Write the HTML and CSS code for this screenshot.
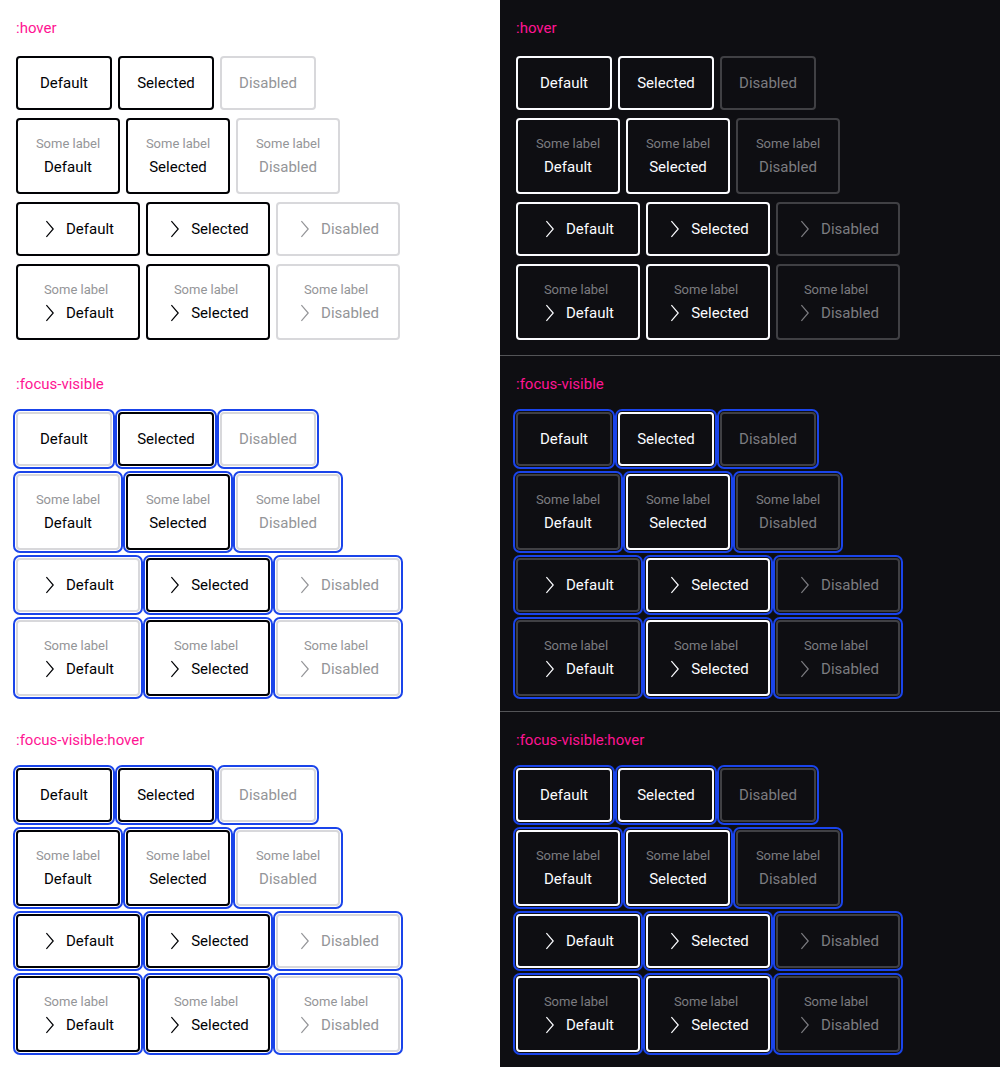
FILE: index.html
```
<!DOCTYPE html>
<html lang="en">
<head>
<meta charset="utf-8">
<meta name="viewport" content="width=device-width, initial-scale=1">
<title>Button tile states</title>
<link rel="stylesheet" href="styles.css">
</head>
<body>
<main class="board" id="board"></main>
<template id="chevron"><svg class="icon" viewBox="0 0 24 24" aria-hidden="true"><path d="M8.4 4.2 15.2 12l-6.8 7.8"/></svg></template>
<script src="states.js"></script>
</body>
</html>
```
FILE: styles.css
```
* { box-sizing: border-box; }

body {
  margin: 0;
  font-family: Roboto, "Liberation Sans", sans-serif;
  font-size: 15px;
  line-height: 24px;
}

.board {
  display: grid;
  grid-template-columns: 1fr 1fr;
}

.theme {
  --bg: #fff;
  --primary: #010205;
  --muted: #949598;
  --low: #d8d8db;
  --line: #fff;
  background: var(--bg);
  color: var(--primary);
}

.theme-dark {
  --bg: #0e0e12;
  --primary: #fbfcff;
  --muted: #7c7c80;
  --low: #404044;
  --line: #535457;
}

.state {
  display: flex;
  flex-direction: column;
  gap: 8px;
  padding: 16px 16px 15px;
}

.state:not(:last-child) { border-bottom: 1px solid var(--line); }

.state-title {
  margin: 0 0 8px;
  font-size: inherit;
  font-weight: 400;
  color: #ff1493;
}

.group {
  display: grid;
  grid-auto-flow: column;
  grid-auto-columns: 1fr;
  align-self: flex-start;
  gap: 6px;
}

.option {
  display: flex;
  flex-direction: column;
  align-items: center;
  min-width: 96px;
  padding: 13px;
  border: 2px solid var(--low);
  border-radius: 4px;
  background: transparent;
  color: inherit;
  font: inherit;
}

.group-label .option { min-width: 104px; }

.group-icon .option {
  min-width: 124px;
  padding-right: 17px;
}

.hovered .option,
.option[aria-pressed="true"] { border-color: var(--primary); }

.option:disabled {
  border-color: var(--low);
  color: var(--muted);
}

.focused .option {
  outline: 2px solid #1a44ea;
  outline-offset: 1px;
}

.caption {
  font-size: 13px;
  line-height: 22px;
  color: var(--muted);
}

.value {
  display: flex;
  gap: 4px;
}

.icon {
  width: 24px;
  height: 24px;
  fill: none;
  stroke: currentColor;
  stroke-width: 1.2;
}
```
FILE: states.js
```
const states = [
  [':hover', 'hovered'],
  [':focus-visible', 'focused'],
  [':focus-visible:hover', 'focused hovered'],
];
const groups = [
  { label: false, icon: false },
  { label: true, icon: false },
  { label: false, icon: true },
  { label: true, icon: true },
];
const chevron = document.getElementById('chevron').innerHTML;

const option = (name, group) => `
  <button type="button" class="option"${name === 'Selected' ? ' aria-pressed="true"' : ''}${name === 'Disabled' ? ' disabled' : ''}>
    ${group.label ? '<span class="caption">Some label</span>' : ''}
    <span class="value">${group.icon ? chevron : ''}<span>${name}</span></span>
  </button>`;

const groupMarkup = (group) => `
  <div class="group${group.label ? ' group-label' : ''}${group.icon ? ' group-icon' : ''}">
    ${['Default', 'Selected', 'Disabled'].map((name) => option(name, group)).join('')}
  </div>`;

document.getElementById('board').innerHTML = ['theme-light', 'theme-dark'].map((theme) => `
  <div class="theme ${theme}">
    ${states.map(([title, classes]) => `
      <section class="state ${classes}">
        <h2 class="state-title">${title}</h2>
        ${groups.map(groupMarkup).join('')}
      </section>`).join('')}
  </div>`).join('');
```
